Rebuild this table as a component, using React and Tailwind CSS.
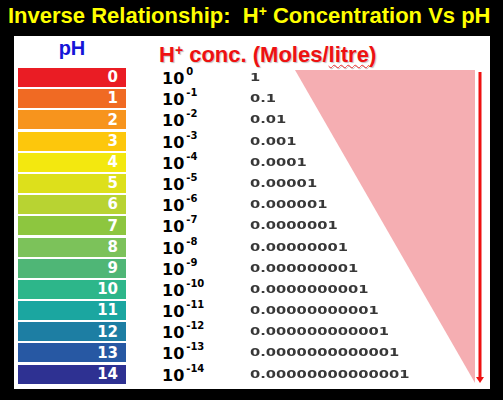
import React from "react";

const rows = [
  { ph: 0, color: "#ea1c24", conc: "1" },
  { ph: 1, color: "#f06a23", conc: "0.1" },
  { ph: 2, color: "#f7941d", conc: "0.01" },
  { ph: 3, color: "#fdc70c", conc: "0.001" },
  { ph: 4, color: "#f3e80f", conc: "0.0001" },
  { ph: 5, color: "#dde01b", conc: "0.00001" },
  { ph: 6, color: "#b8d332", conc: "0.000001" },
  { ph: 7, color: "#8dc63f", conc: "0.0000001" },
  { ph: 8, color: "#7cc25a", conc: "0.00000001" },
  { ph: 9, color: "#4fb676", conc: "0.000000001" },
  { ph: 10, color: "#2db68a", conc: "0.0000000001" },
  { ph: 11, color: "#1ba6a0", conc: "0.00000000001" },
  { ph: 12, color: "#1d7ea3", conc: "0.000000000001" },
  { ph: 13, color: "#2758a3", conc: "0.0000000000001" },
  { ph: 14, color: "#2e3192", conc: "0.00000000000001" },
];

export default function App() {
  return (
    <div className="w-[503px] h-[400px] bg-black overflow-hidden font-['Liberation_Sans',Arial,sans-serif]">
      {/* Title */}
      <div className="h-[36px] pl-[8px] pt-[5px] text-[22px] leading-[22px] font-bold text-[#ffff00] whitespace-nowrap">
        Inverse Relationship:&nbsp; H<sup className="text-[14px] relative -top-[7px]">+</sup> Concentration Vs pH
      </div>

      {/* White panel */}
      <div className="relative ml-[14px] w-[476px] h-[353px] bg-white">
        {/* Decreasing wedge + arrow */}
        <svg className="absolute inset-0" width="476" height="353" viewBox="0 0 476 353">
          <polygon points="281,34 461,34 461,347" fill="#f5aeb2" />
          <line x1="466" y1="36" x2="466" y2="344" stroke="#ee1111" strokeWidth="3" />
          <polygon points="462,341 470,341 466,347" fill="#ee1111" />
        </svg>

        <div className="relative flex flex-col px-[4px]">
          {/* Header */}
          <div className="flex h-[32px]">
            <div className="w-[108px] flex justify-center pt-[2px] text-[20px] leading-[20px] font-bold text-[#1515d8]">
              pH
            </div>
            <div className="ml-[33px] pt-[8px] text-[22px] leading-[22px] font-bold text-[#ee1111] whitespace-nowrap [text-shadow:1px_1px_1px_rgba(0,0,0,0.25)]">
              H<sup className="text-[14px] relative -top-[7px]">+</sup> conc. (Moles/
              <span className="underline decoration-wavy decoration-[#e33] decoration-1 underline-offset-2">litre</span>)
            </div>
          </div>

          {/* Rows */}
          <div className="flex flex-col gap-[2.2px]">
            {rows.map((r) => (
              <div key={r.ph} className="flex items-center h-[19px]">
                <div
                  className="w-[108px] h-full flex items-center justify-end pr-[8px] text-white font-bold text-[15px] font-['DejaVu_Sans',sans-serif]"
                  style={{ backgroundColor: r.color }}
                >
                  {r.ph}
                </div>
                <div className="w-[90px] pl-[36px] pt-[3px] flex items-start text-black font-bold text-[16px] leading-[16px] font-['DejaVu_Sans',sans-serif]">
                  10
                  <span className="text-[10px] leading-[10px] -mt-[4px] ml-[2px]">
                    {r.ph === 0 ? "0" : "-" + r.ph}
                  </span>
                </div>
                <div className="ml-[34px] pt-[1px] text-[11px] leading-[12px] font-bold text-[#383838] font-['DejaVu_Sans',sans-serif] scale-x-[1.34] origin-left whitespace-nowrap">
                  {r.conc}
                </div>
              </div>
            ))}
          </div>
        </div>
      </div>
    </div>
  );
}
